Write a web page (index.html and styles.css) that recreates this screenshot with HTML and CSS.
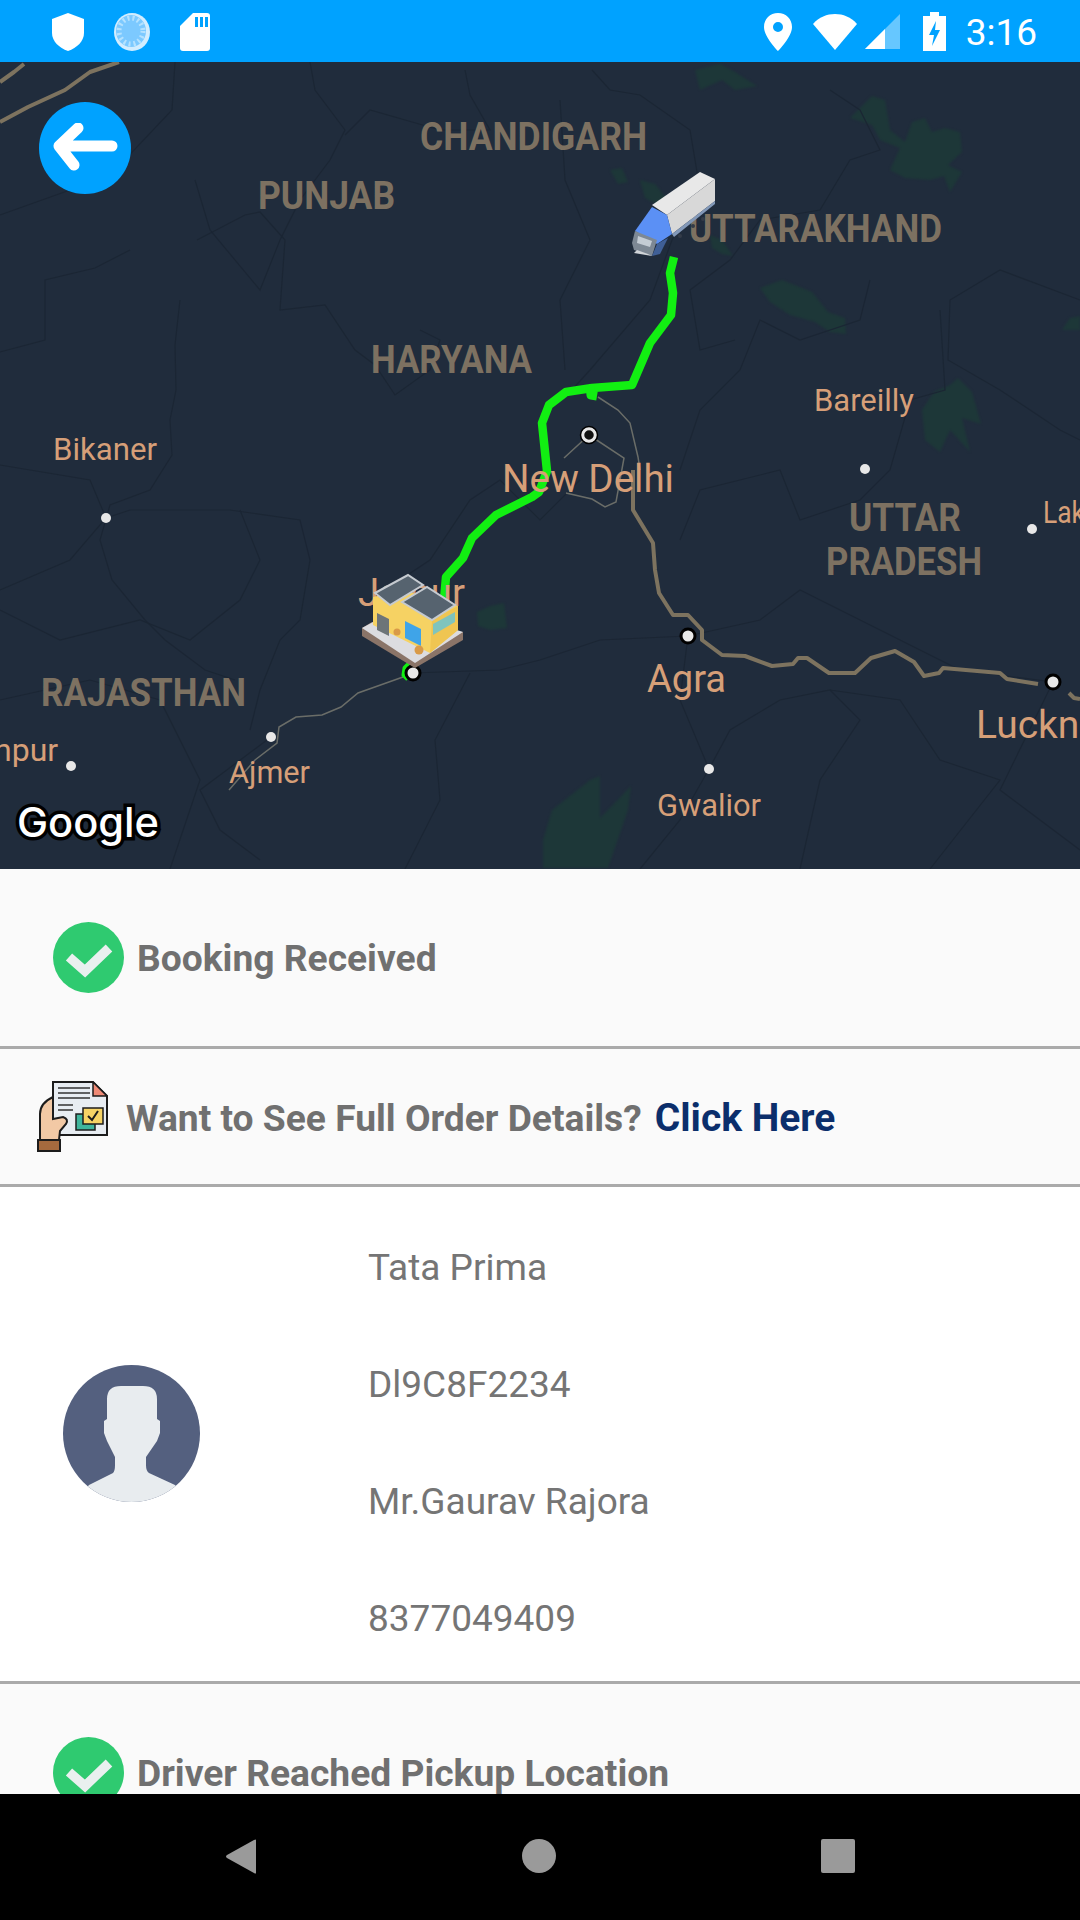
FILE: index.html
```html
<!DOCTYPE html>
<html>
<head>
    <meta charset="UTF-8">
    <title>Track Order</title>
    <link rel="stylesheet" href="styles.css">
</head>
<body>
    <div id="status-bar">
        <div class="status-group">
            <svg width="32" height="38" viewBox="0 0 32 38"><path d="M16 0L32 6V20C32 28 25 35 16 38C7 35 0 28 0 20V6Z" fill="#fff"/></svg>
            <svg width="36" height="38" viewBox="0 0 36 38"><ellipse cx="18" cy="19" rx="18" ry="19" fill="#d2edff"/><ellipse cx="17" cy="18" rx="15" ry="16" fill="#7cc9ff"/><ellipse cx="17" cy="18" rx="12" ry="13" fill="none" stroke="#b5e2ff" stroke-width="5" stroke-dasharray="2 3"/></svg>
            <svg width="30" height="38" viewBox="0 0 30 38"><path d="M13 0H27Q30 0 30 3V35Q30 38 27 38H3Q0 38 0 35V13Z" fill="#fff"/><path d="M15 4h3v10h-3zM20 4h3v10h-3zM25 4h3v10h-3z" fill="#00a2ff"/></svg>
        </div>
        <div class="status-right">
            <svg class="icon-location" width="28" height="38" viewBox="0 0 28 38"><path fill-rule="evenodd" d="M14 0C6 0 0 6 0 14C0 24 14 38 14 38S28 24 28 14C28 6 22 0 14 0ZM14 9A5 5 0 1 1 14 19A5 5 0 1 1 14 9Z" fill="#fff"/></svg>
            <svg class="icon-wifi" width="44" height="36" viewBox="0 0 44 36"><path d="M22 36L44 10C38 3 30 0 22 0S6 3 0 10Z" fill="#fff"/></svg>
            <svg class="icon-signal" width="35" height="35" viewBox="0 0 35 35"><path d="M35 0V35H0Z" fill="#66c7ff"/><path d="M20 15V35H0Z" fill="#fff"/></svg>
            <svg class="icon-battery" width="23" height="39" viewBox="0 0 23 39"><path fill-rule="evenodd" d="M7 0H16V4H23V39H0V4H7ZM13 9L6 23H11L9 34L17 18H12Z" fill="#fff"/></svg>
            <span class="clock">3:16</span>
        </div>
    </div>

    <div id="map">
        <svg class="map-canvas" width="1080" height="807" viewBox="0 62 1080 807">
            <rect x="0" y="62" width="1080" height="807" fill="#202c3c"/>

            <!-- forest patches -->
            <g class="forest">
                <path d="M695 70L720 64L735 72L757 86L735 90L722 80L700 90Z"/>
                <path d="M850 118L872 96L885 100L890 130L905 142L912 122L925 118L932 132L945 128L960 132L962 152L948 165L962 172L950 192L944 176L930 180L905 178L890 170L900 148L880 140L872 125Z"/>
                <path d="M610 170L622 168L628 182L618 184ZM640 180L655 184L668 200L660 206L645 198Z"/>
                <path d="M760 288L782 280L812 292L828 312L845 318L846 334L830 332L815 322L790 315L770 302Z"/>
                <path d="M710 235L722 240L733 256L722 254L712 248Z"/>
                <path d="M922 410L934 392L950 385L958 378L972 392L981 424L962 418L970 452L950 430L940 452L925 440Z"/>
                <path d="M1062 330L1070 318L1080 316V330Z"/>
                <path d="M477 612L490 606L504 603L507 628L490 630L478 626Z"/>
                <path d="M543 840L552 810L590 780L600 776L600 818L631 786L628 810L608 868H543Z"/>
            </g>

            <!-- district borders -->
            <g class="borders">
                <path d="M175 62L172 110L120 165L70 190L0 215"/>
                <path d="M310 62L315 90L345 130L330 160L300 200L280 240L260 290L210 230L195 180"/>
                <path d="M197 240L245 215L260 212L285 240L280 310L325 305L355 350L375 365L395 395L430 370L440 340L420 330"/>
                <path d="M180 300L175 345L176 390L170 420L172 455L150 490L110 505L100 540L112 580L145 620L165 640L205 670L235 680"/>
                <path d="M0 352L45 340L45 280L95 268L130 250"/>
                <path d="M106 518L130 510L230 510L300 520L310 560L300 620L280 640L260 690L250 730"/>
                <path d="M465 70L470 95L490 130L440 130L370 110L345 135"/>
                <path d="M592 70L610 90L640 95L690 130L700 190L672 240L650 300L590 370L570 392"/>
                <path d="M560 100L565 180L590 240L560 300L565 370"/>
                <path d="M830 90L860 110L880 150L850 160L820 210L760 220L730 260L690 290L700 350L735 340"/>
                <path d="M1080 300L1000 270L950 300L948 360L1000 390L1060 430L1080 440"/>
                <path d="M870 280L860 320L800 340L760 320L740 370L700 410L680 470"/>
                <path d="M940 310L945 390L910 400L890 470L860 500L800 520L780 470L700 490L680 540"/>
                <path d="M370 600L430 560L470 500L500 480L540 520L580 480"/>
                <path d="M0 610L60 640L140 620L190 640L240 600L260 560L240 510"/>
                <path d="M412 673L500 670L540 660L600 640L688 636L760 620L800 590L900 640L960 670L1053 682"/>
                <path d="M470 673L435 740L440 800L405 869"/>
                <path d="M0 700L90 680L160 700L200 780L170 869"/>
                <path d="M271 737L200 790L220 830L260 860"/>
                <path d="M688 636L680 700L709 769L680 820L640 869"/>
                <path d="M709 769L730 730L780 700L830 690L860 720L820 780L800 869"/>
                <path d="M830 690L900 700L940 760L1000 780L930 869"/>
                <path d="M1053 682L1000 790L1040 820L1080 850"/>
                <path d="M0 465L90 480L106 518L70 560L0 590"/>
            </g>

            <!-- rivers and roads -->
            <g class="river">
                <path d="M119 62L90 72L65 90L28 107L0 122"/>
                <path d="M24 64L14 72L0 82"/>
                <path d="M633 470V510L653 543L655 570L659 593L673 615H688L702 630V640L722 655L745 656L772 666L793 664L798 658H807L829 673H855L871 658L895 651L914 662L924 676L939 673L943 668L1000 673L1007 679L1038 684"/>
                <path d="M1069 693L1074 698L1080 699"/>
            </g>
            <g class="road">
                <path d="M403 677L358 693L341 707L322 715L296 717L279 727L277 743L255 760L229 790"/>
                <path d="M598 397L618 410L630 423L638 457L640 470"/>
                <path d="M589 435L564 458M566 493L592 499L605 507L616 502L624 458L589 435"/>
            </g>

            <!-- route -->
            <path class="route" d="M674 257L670 273L673 293L671 315L650 343L632 385L592 388L566 392L549 405L542 423L547 471L539 492L532 497L496 515L472 538L463 558L446 577L444 600"/>
            <path class="route route-blob" d="M590 386L591 395L597 396"/>
            <path class="route route-thin" d="M411 662L405 668L404 675L408 679"/>

            <!-- labels -->
            <text class="state" x="420" y="150" textLength="227" lengthAdjust="spacingAndGlyphs">CHANDIGARH</text>
            <text class="state" x="258" y="209" textLength="137" lengthAdjust="spacingAndGlyphs">PUNJAB</text>
            <text class="state" x="689" y="242" textLength="253" lengthAdjust="spacingAndGlyphs">UTTARAKHAND</text>
            <text class="state" x="371" y="373" textLength="161" lengthAdjust="spacingAndGlyphs">HARYANA</text>
            <text class="state" x="849" y="531" textLength="112" lengthAdjust="spacingAndGlyphs">UTTAR</text>
            <text class="state" x="826" y="575" textLength="156" lengthAdjust="spacingAndGlyphs">PRADESH</text>
            <text class="state" x="41" y="706" textLength="205" lengthAdjust="spacingAndGlyphs">RAJASTHAN</text>

            <text class="city" x="53" y="460" textLength="104" lengthAdjust="spacingAndGlyphs">Bikaner</text>
            <text class="city" x="814" y="411" textLength="100" lengthAdjust="spacingAndGlyphs">Bareilly</text>
            <text class="city" x="1043" y="523" textLength="42" lengthAdjust="spacingAndGlyphs">Lak</text>
            <text class="city" x="-6" y="761">npur</text>
            <text class="city" x="229" y="783" textLength="81" lengthAdjust="spacingAndGlyphs">Ajmer</text>
            <text class="city" x="657" y="816" textLength="104" lengthAdjust="spacingAndGlyphs">Gwalior</text>
            <text class="city city-big" x="502" y="492" textLength="172" lengthAdjust="spacingAndGlyphs">New Delhi</text>
            <text class="city city-big" x="647" y="692" textLength="79" lengthAdjust="spacingAndGlyphs">Agra</text>
            <text class="city city-big" x="976" y="738">Lucknow</text>
            <text class="city city-big" x="358" y="606" textLength="107" lengthAdjust="spacingAndGlyphs">Jaipur</text>

            <text class="google" x="17" y="837" textLength="142" lengthAdjust="spacingAndGlyphs">Google</text>

            <!-- city dots -->
            <g class="dot">
                <circle cx="106" cy="518" r="5"/>
                <circle cx="271" cy="737" r="5"/>
                <circle cx="71" cy="766" r="5"/>
                <circle cx="709" cy="769" r="5"/>
                <circle cx="1032" cy="529" r="5"/>
                <circle cx="865" cy="469" r="5"/>
            </g>
            <g class="dot dot-major">
                <circle cx="688" cy="636" r="7"/>
                <circle cx="1053" cy="682" r="7"/>
                <circle cx="413" cy="673" r="7"/>
            </g>
            <circle cx="589" cy="435" r="6.5" fill="#111" stroke="#e8e8e8" stroke-width="3.5"/>
            <circle cx="589" cy="435" r="8.5" fill="none" stroke="#000" stroke-width="1.5"/>

            <!-- truck marker -->
            <g class="marker">
                <path d="M700 172L715 179L667 215L652 205Z" fill="#e8e8e8"/>
                <path d="M715 179V201L672 234L667 215Z" fill="#d8d8d8"/>
                <path d="M672 234L715 201V204L674 237Z" fill="#8298b8"/>
                <path d="M635 231L652 207L667 215L672 234L657 244Z" fill="#5b90f5"/>
                <path d="M635 231L657 240L652 256L634 250L632 243Z" fill="#7d8894"/>
                <path d="M638 236L652 241L650 247L637 243Z" fill="#c4ccd4"/>
                <path d="M637 250L648 254L652 256L634 253Z" fill="#d0d4d8"/>
                <path d="M657 244L668 238L660 254L652 256Z" fill="#3f5f96"/>
                <circle cx="680" cy="236" r="2" fill="#333c48"/>
                <circle cx="693" cy="226" r="2" fill="#333c48"/>
                <circle cx="703" cy="219" r="2" fill="#333c48"/>
            </g>

            <!-- warehouse marker -->
            <g class="marker">
                <path d="M362 628L372 622L463 632V640L415 668L362 636Z" fill="#8a7468"/>
                <path d="M362 628L395 610L463 632L415 663Z" fill="#dcdce0"/>
                <path d="M373 597L402 590L458 606V630L430 653L373 625Z" fill="#f6d263"/>
                <path d="M432 620L458 606V630L430 653Z" fill="#efc552"/>
                <path d="M375 593L408 575L423 585L390 605Z" fill="#56636f" stroke="#c5cad0" stroke-width="2"/>
                <path d="M402 602L427 587L455 605L432 620Z" fill="#56636f" stroke="#c5cad0" stroke-width="2"/>
                <path d="M377 613L389 619V636L377 630Z" fill="#6d7478"/>
                <path d="M405 621L421 629V646L405 638Z" fill="#3fa4e8"/>
                <path d="M433 624L455 612V622L433 635Z" fill="#7fc4bd"/>
                <circle cx="397" cy="632" r="3.5" fill="#d99a48"/>
                <circle cx="419" cy="650" r="4.5" fill="#d99a48"/>
            </g>
        </svg>

        <button id="back-button">
            <svg width="66" height="50" viewBox="0 0 66 50"><path d="M7 23H60M26 5L7 23L22 42" fill="none" stroke="#fff" stroke-width="11" stroke-linecap="round" stroke-linejoin="round"/></svg>
        </button>
    </div>

    <div id="content">
        <div class="step-row">
            <svg class="check-icon" width="71" height="71" viewBox="0 0 71 71"><circle cx="35.5" cy="35.5" r="35.5" fill="#2fca70"/><path d="M16 35L32 49L56 26" fill="none" stroke="#e9f0ef" stroke-width="9.5"/></svg>
            <span class="step-title">Booking Received</span>
        </div>

        <div class="details-row">
            <svg class="details-icon" width="71" height="71" viewBox="0 0 71 71">
                <path d="M16 1H56L70 15V54H16Z" fill="#e8edf2" stroke="#1c1c1c" stroke-width="2"/>
                <path d="M56 1L70 15H56Z" fill="#ef8a76" stroke="#1c1c1c" stroke-width="1.5"/>
                <path d="M21 7H53M21 12H53M21 17H53M21 24H36M21 29H36" stroke="#333" stroke-width="1.6"/>
                <rect x="39" y="33" width="19" height="16" fill="#3fb59c" stroke="#1c1c1c" stroke-width="1.5"/>
                <rect x="46" y="27" width="20" height="16" fill="#f6d365" stroke="#1c1c1c" stroke-width="1.5"/>
                <path d="M51 35L55 39L61 30" fill="none" stroke="#1c1c1c" stroke-width="2"/>
                <path d="M3 59V33Q3 22 16 16V38L26 36Q32 38 29 43L23 50L22 59Z" fill="#f2c9a5" stroke="#1c1c1c" stroke-width="2"/>
                <rect x="1" y="59" width="22" height="11" fill="#a56a3e" stroke="#1c1c1c" stroke-width="2"/>
            </svg>
            <span class="details-text">Want to See Full Order Details?</span>
            <a class="details-link">Click Here</a>
        </div>

        <div class="driver-card">
            <div class="driver-photo">
                <svg width="137" height="137" viewBox="0 0 137 137">
                    <defs><clipPath id="avatar-clip"><circle cx="68.5" cy="68.5" r="68.5"/></clipPath></defs>
                    <circle cx="68.5" cy="68.5" r="68.5" fill="#54607f"/>
                    <path clip-path="url(#avatar-clip)" d="M26 120L50 108Q52 106 52 100V92L44 76L41 68V56L44 54V34Q44 21 58 21H80Q94 21 94 34V54L97 56V68L94 76L83 92V100Q83 106 86 108L112 120L137 150H0Z" fill="#e8ecef"/>
                </svg>
            </div>
            <div class="driver-info">
                <div class="driver-line">Tata Prima</div>
                <div class="driver-line">Dl9C8F2234</div>
                <div class="driver-line">Mr.Gaurav Rajora</div>
                <div class="driver-line">8377049409</div>
            </div>
        </div>

        <div class="step-row step-last">
            <svg class="check-icon" width="71" height="71" viewBox="0 0 71 71"><circle cx="35.5" cy="35.5" r="35.5" fill="#2fca70"/><path d="M16 35L32 49L56 26" fill="none" stroke="#e9f0ef" stroke-width="9.5"/></svg>
            <span class="step-title">Driver Reached Pickup Location</span>
        </div>
    </div>

    <div id="nav-bar">
        <svg width="30" height="35" viewBox="0 0 30 35"><path d="M30 1V34Q30 35 28 34L1 19Q-1 17.5 1 16L28 1Q30 0 30 1Z" fill="#9a9a9a"/></svg>
        <svg width="34" height="34" viewBox="0 0 34 34"><circle cx="17" cy="17" r="17" fill="#9a9a9a"/></svg>
        <svg width="34" height="34" viewBox="0 0 34 34"><rect width="34" height="34" rx="2" fill="#9a9a9a"/></svg>
    </div>
</body>
</html>
```

FILE: styles.css
```css
html, body {
    margin: 0;
    padding: 0;
}
body {
    width: 1080px;
    height: 1920px;
    overflow: hidden;
    display: flex;
    flex-direction: column;
    font-family: Roboto, "Liberation Sans", sans-serif;
    background: #fff;
}
#status-bar {
    height: 62px;
    flex: none;
    background-color: #00a2ff;
    display: flex;
    justify-content: space-between;
    align-items: center;
    padding: 1px 43px 0 52px;
    box-sizing: border-box;
}
.status-group {
    display: flex;
    align-items: center;
    gap: 30px;
}
.status-right {
    display: flex;
    align-items: center;
}
.icon-wifi {
    margin-left: 21px;
}
.icon-signal {
    margin-left: 8px;
}
.icon-battery {
    margin-left: 23px;
}
.clock {
    color: #fff;
    font-size: 37px;
    margin-left: 20px;
    padding-top: 2px;
}
#map {
    position: relative;
    height: 807px;
    flex: none;
    overflow: hidden;
}
.map-canvas {
    display: block;
}
.forest {
    filter: blur(0.8px);
}
.forest path {
    fill: #1d3738;
}
.borders {
    filter: blur(0.4px);
}
.borders path {
    fill: none;
    stroke: #1b2634;
    stroke-width: 1.2;
}
.river path {
    fill: none;
    stroke: #7d735f;
    stroke-width: 4;
    stroke-linejoin: round;
}
.road path {
    fill: none;
    stroke: #6a6d68;
    stroke-width: 1.5;
}
.route {
    fill: none;
    stroke: #12ef12;
    stroke-width: 8.5;
    stroke-linejoin: round;
}
.route-blob {
    stroke-width: 9;
}
.route-thin {
    stroke-width: 5;
}
.marker {
    filter: blur(0.4px);
}
.state {
    fill: #7d7161;
    font-size: 38px;
    font-weight: 700;
}
.city {
    fill: #d69f78;
    font-size: 32px;
}
.city-big {
    font-size: 39px;
}
.google {
    fill: #fff;
    stroke: #000;
    stroke-width: 7px;
    paint-order: stroke;
    font-family: Inter, sans-serif;
    font-size: 41px;
    font-weight: 500;
}
.dot circle {
    fill: #e8e8e8;
}
.dot-major circle {
    stroke: #000;
    stroke-width: 3;
}
#back-button {
    position: absolute;
    top: 40px;
    left: 39px;
    width: 92px;
    height: 92px;
    padding: 0;
    border: none;
    border-radius: 50%;
    background-color: #00a2ff;
    display: flex;
    justify-content: center;
    align-items: center;
}
#content {
    flex: 1;
    overflow: hidden;
    min-height: 0;
}
.step-row {
    height: 177px;
    display: flex;
    align-items: center;
    padding-left: 53px;
    gap: 13px;
    background-color: #fafafa;
    border-bottom: 3px solid #aaa;
}
.step-last {
    height: 110px;
    align-items: flex-start;
    padding-top: 53px;
    border-bottom: none;
}
.step-title {
    font-size: 37.2px;
    font-weight: 700;
    color: #707070;
}
.step-last .step-title {
    margin-top: 14px;
}
.check-icon, .details-icon {
    flex: none;
}
.details-row {
    height: 135px;
    display: flex;
    align-items: center;
    padding-left: 37px;
    background-color: #fafafa;
    border-bottom: 3px solid #aaa;
}
.details-icon {
    margin-right: 18px;
}
.details-text {
    font-size: 37.2px;
    font-weight: 700;
    color: #707070;
    margin: 3px 13px 0 0;
}
.details-link {
    font-size: 39px;
    font-weight: 700;
    color: #0b2e6b;
    margin-top: 3px;
}
.driver-card {
    height: 494px;
    display: flex;
    align-items: center;
    background-color: #fff;
    border-bottom: 3px solid #aaa;
}
.driver-photo {
    width: 368px;
    padding: 0 0 2px 63px;
    box-sizing: border-box;
    flex: none;
    display: flex;
}
.driver-info {
    display: flex;
    flex-direction: column;
    align-self: flex-start;
    padding-top: 22px;
}
.driver-line {
    height: 117px;
    line-height: 117px;
    font-size: 37px;
    color: #757575;
}
#nav-bar {
    height: 126px;
    flex: none;
    background: #000;
    display: flex;
    gap: 265.5px;
    padding: 45px 0 0 226px;
    align-items: flex-start;
    box-sizing: border-box;
}
```
